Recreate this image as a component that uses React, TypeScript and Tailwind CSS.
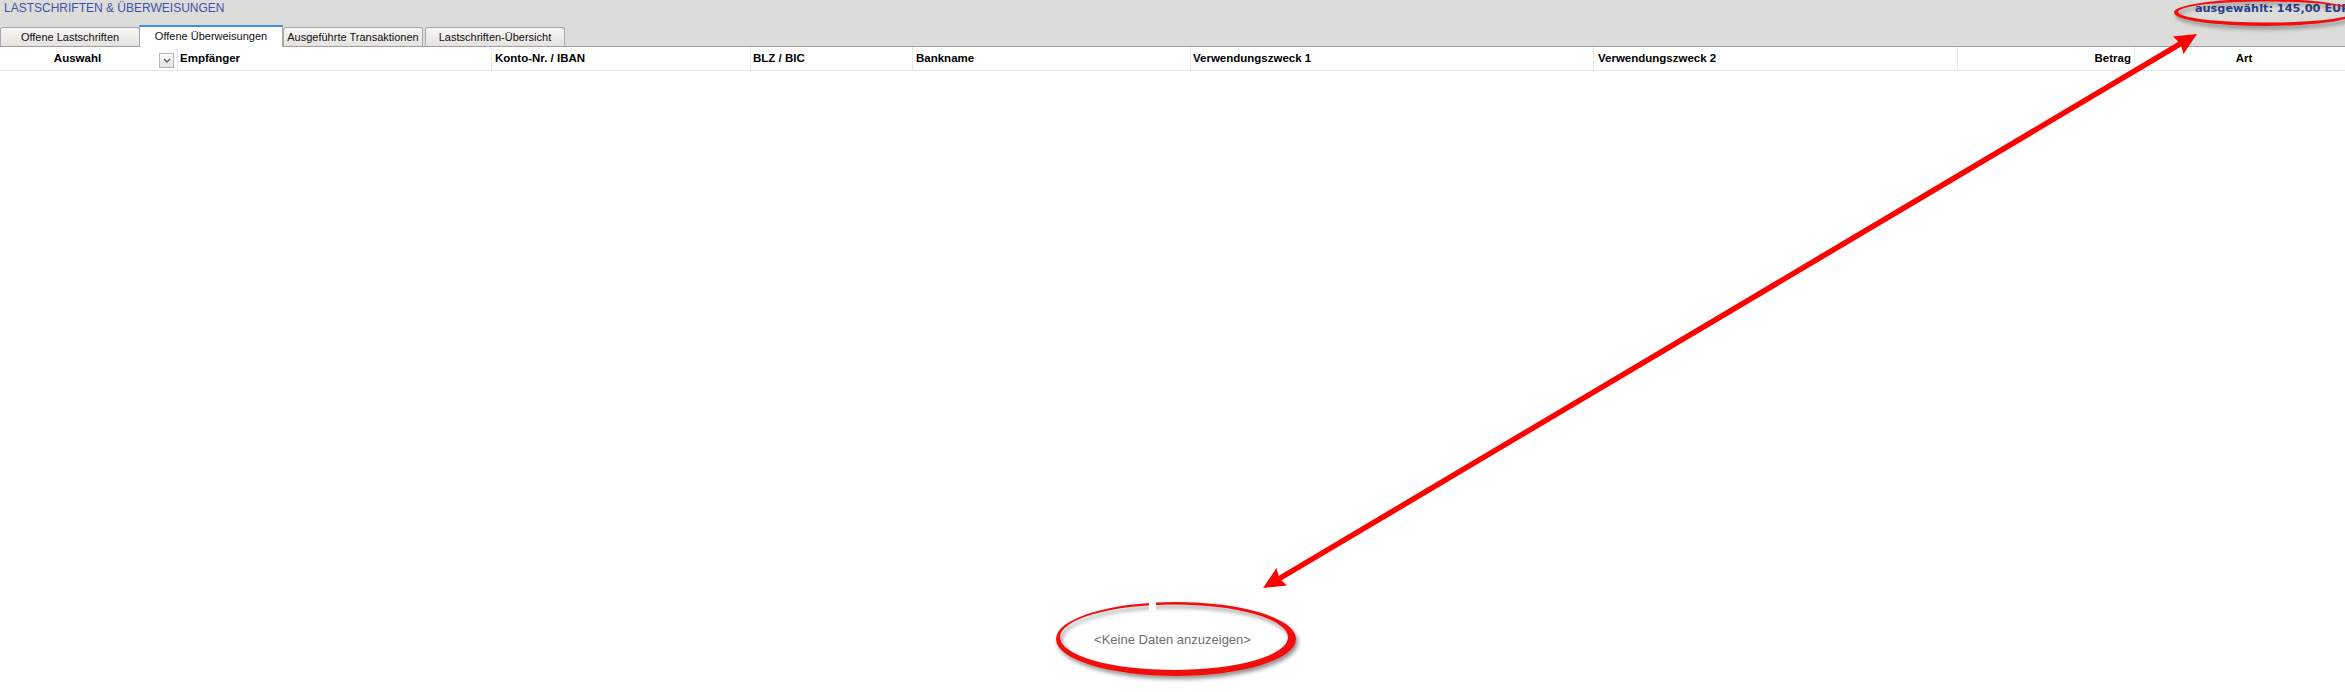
import React from "react";

const sans = { fontFamily: '"Liberation Sans", Arial, sans-serif' };

function Tab({ label, active, className }: { label: string; active?: boolean; className: string }) {
  if (active) {
    return (
      <div
        className={`relative z-10 -mb-px h-[22px] border-x border-t-2 border-x-[#a9a9a9] border-t-[#3d8ee0] bg-white text-center text-[11px] leading-[19px] text-[#111] ${className}`}
      >
        {label}
      </div>
    );
  }
  return (
    <div
      className={`h-[19px] rounded-t-[3px] border border-b-0 border-[#a9a9a9] bg-gradient-to-b from-[#f8f7f5] to-[#e4e2de] text-center text-[11px] leading-[18px] text-[#111] ${className}`}
    >
      {label}
    </div>
  );
}

function Annotations() {
  return (
    <svg
      className="pointer-events-none absolute left-0 top-0"
      width={2345}
      height={692}
      viewBox="0 0 2345 692"
    >
      <defs>
        <filter id="penShadow" x="-20%" y="-60%" width="140%" height="220%">
          <feDropShadow dx="2" dy="3" stdDeviation="2" floodColor="#000" floodOpacity="0.45" />
        </filter>
      </defs>

      {/* ring around the selected sum */}
      <path
        fill="#f20d0d"
        fillRule="evenodd"
        filter="url(#penShadow)"
        d="M2174 12.5 a91 13.5 0 1 0 182 0 a91 13.5 0 1 0 -182 0 Z M2178 12 a88 10.5 0 1 0 176 0 a88 10.5 0 1 0 -176 0 Z"
      />

      {/* ring around the empty-state text */}
      <path
        fill="#f20d0d"
        fillRule="evenodd"
        filter="url(#penShadow)"
        d="M1056 639 a120 37 0 1 0 240 0 a120 37 0 1 0 -240 0 Z M1060 637.25 a114 32.75 0 1 0 228 0 a114 32.75 0 1 0 -228 0 Z"
      />
      <polygon points="1149,597 1156,597 1156,611 1149,611" fill="#ffffff" />

      {/* double-headed arrow */}
      <line x1="2180.6" y1="43.7" x2="1279.4" y2="578.5" stroke="#ff0000" strokeWidth="5.5" />
      <polygon points="1263,588 1276.5,568 1279.4,578.5 1287,585.5" fill="#ff0000" />
      <polygon points="2197,34 2173,36.5 2180.6,43.7 2183.5,54" fill="#ff0000" />
    </svg>
  );
}

export default function App() {
  return (
    <div className="relative h-[692px] w-[2345px] overflow-hidden bg-white" style={sans}>
      {/* title bar + tabs */}
      <div className="bg-[#dcdddb]">
        <div className="flex h-[25px] items-start justify-between">
          <div className="pl-[4px] text-[12px] leading-[16px] text-[#3e52a8]">
            LASTSCHRIFTEN &amp; ÜBERWEISUNGEN
          </div>
          <div
            className="-mr-[5px] whitespace-nowrap pt-[2px] text-[11.3px] font-bold leading-[14px] text-[#2c3f8f]"
            style={{ fontFamily: '"DejaVu Sans", Verdana, sans-serif' }}
          >
            ausgewählt: 145,00 EUR
          </div>
        </div>
        <div className="flex h-[22px] items-end border-b border-[#a0a0a0]">
          <Tab label="Offene Lastschriften" className="w-[140px] -mr-px" />
          <Tab label="Offene Überweisungen" active className="w-[144px]" />
          <Tab label="Ausgeführte Transaktionen" className="w-[140px]" />
          <Tab label="Lastschriften-Übersicht" className="ml-[2px] w-[140px]" />
        </div>
      </div>

      {/* column headers */}
      <div className="flex h-[24px] items-stretch border-b border-[#e2e5f1] text-[11.5px] font-bold leading-[23px] text-black">
        <div className="w-[155px] text-center">Auswahl</div>
        <div className="flex w-[23px] items-start border-r border-[#e6e9f4] pl-[4px] pt-[6px]">
          <div className="flex h-[15px] w-[15px] items-center justify-center border border-[#b4b7bc] bg-gradient-to-b from-white to-[#e3e3e3]">
            <svg width="8" height="5" viewBox="0 0 8 5">
              <polyline points="1,1 4,4 7,1" fill="none" stroke="#5a5a5a" strokeWidth="1.3" />
            </svg>
          </div>
        </div>
        <div className="w-[314px] border-r border-[#e6e9f4] pl-[2px]">Empfänger</div>
        <div className="w-[259px] border-r border-[#e6e9f4] pl-[3px]">Konto-Nr. / IBAN</div>
        <div className="w-[162px] border-r border-[#e6e9f4] pl-[2px]">BLZ / BIC</div>
        <div className="w-[278px] border-r border-[#e6e9f4] pl-[3px]">Bankname</div>
        <div className="w-[403px] border-r border-[#e6e9f4] pl-[2px]">Verwendungszweck 1</div>
        <div className="w-[364px] border-r border-[#e6e9f4] pl-[4px]">Verwendungszweck 2</div>
        <div className="w-[177px] border-r border-[#e6e9f4] pr-[3px] text-right">Betrag</div>
        <div className="flex-1 pl-[8px] text-center">Art</div>
      </div>

      {/* grid body */}
      <div className="flex h-[621px] flex-col items-center justify-end pb-[44px]">
        <div className="text-[13px] leading-[16px] text-[#6e6e72]">&lt;Keine Daten anzuzeigen&gt;</div>
      </div>

      <Annotations />
    </div>
  );
}
